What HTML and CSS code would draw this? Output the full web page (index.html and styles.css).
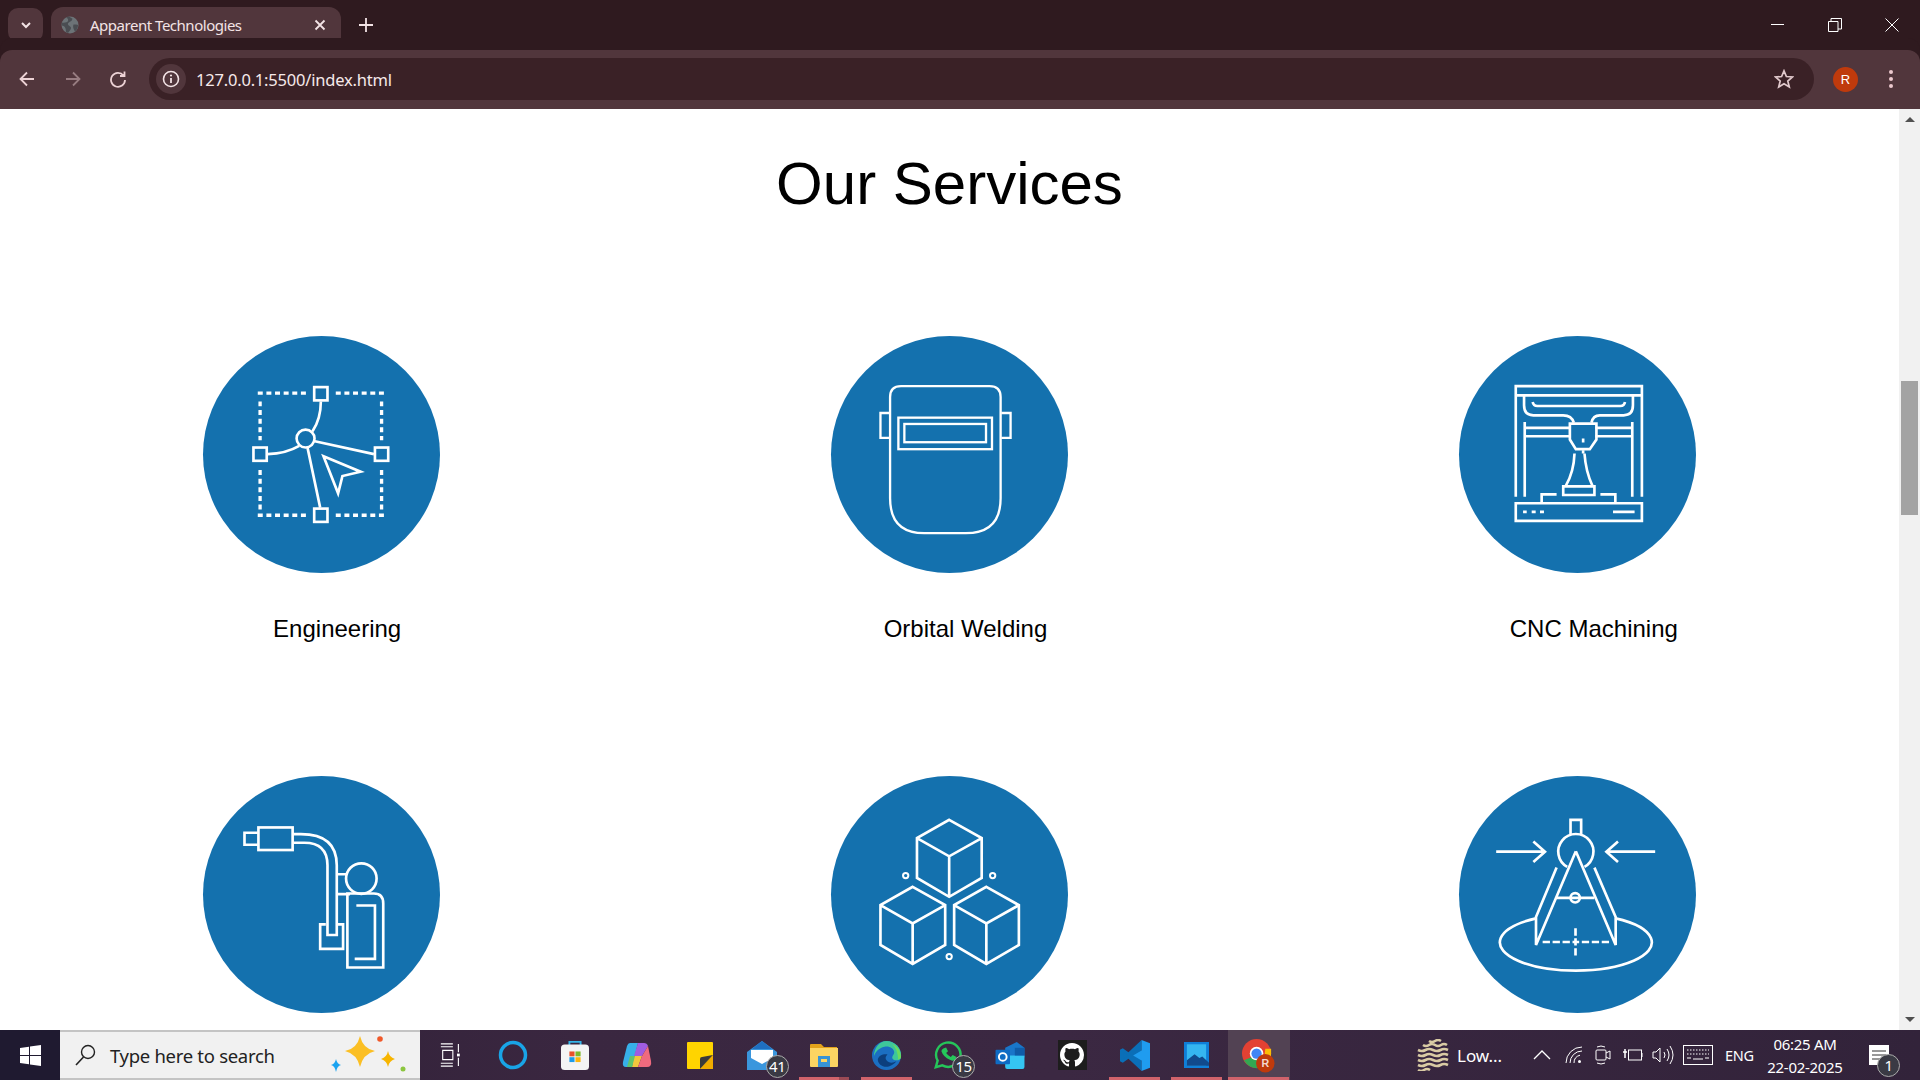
FILE: index.html
```html
<!DOCTYPE html>
<html lang="en-US">
  <head>
    <title>Apparent Technologies</title>
    <meta charset="utf-8" />
    <meta name="viewport" content="width=device-width, initial-scale=1.0" />
    <link rel="stylesheet" href="styles.css">
  </head>
  <body>
    <!-- browser chrome -->
    <header class="tabstrip">
      <div class="tab-search">
        <svg width="14" height="14" viewBox="0 0 14 14"><path class="chrome-stroke" d="M3 5l4 4 4-4" stroke-width="2"/></svg>
      </div>
      <div class="tab">
        <svg class="favicon" width="18" height="18" viewBox="0 0 18 18"><circle cx="9" cy="9" r="8.500" fill="#6c7377"/><path d="M5 1.500c2 1 2.500 2 2 3.500S3 7 1 6.500c-.5 1-.5 2-.5 3 2 0 3.500 1 4 3s.5 3 .5 3.500l2 1c1-2 3-3 3-5s-3-2-3-4 3-2 4-4 0-1.500 0-1.500L8 .5z" fill="#4a4d52"/><path d="M12.500 8.500c2 0 3.500 0 4.500.5 0 3-1 5-3 6.500-1.500-2-2.500-5-1.500-7z" fill="#4a4d52"/></svg>
        <span class="tab-title">Apparent Technologies</span>
        <svg class="tab-close" width="12" height="12" viewBox="0 0 12 12"><path class="chrome-stroke" d="M1.500 1.500l9 9M10.500 1.500l-9 9" stroke-width="1.800"/></svg>
      </div>
      <svg class="new-tab" width="14" height="14" viewBox="0 0 14 14"><path class="chrome-stroke" d="M7 0v14M0 7h14" stroke-width="1.800"/></svg>
      <div class="window-btns">
        <svg width="14" height="14" viewBox="0 0 14 14"><path d="M0 6.500h13" stroke="#fff" fill="none" stroke-width="1"/></svg>
        <svg width="14" height="14" viewBox="0 0 14 14"><path d="M.500 3.500h9.500v10H.500zM3 3.500V.500h10.500V11H10" stroke="#fff" fill="none"/></svg>
        <svg width="14" height="14" viewBox="0 0 14 14"><path d="M.500.500l13 13M13.500.500l-13 13" stroke="#fff" fill="none"/></svg>
      </div>
    </header>

    <nav class="toolbar">
      <svg class="nav-btn" width="18" height="18" viewBox="0 0 18 18"><path class="nav-stroke" d="M16 9H2.500M9 2.500L2.500 9 9 15.500"/></svg>
      <svg class="nav-btn nav-off" width="18" height="18" viewBox="0 0 18 18"><path class="nav-stroke" d="M2 9h13.500M9 2.500L15.500 9 9 15.500"/></svg>
      <svg class="nav-btn" width="18" height="18" viewBox="0 0 18 18"><path class="nav-stroke" d="M14.500 5.500A7 7 0 1 0 16 10M15.500 1.500v4.500H11"/></svg>
      <div class="address">
        <div class="info-chip">
          <svg width="18" height="18" viewBox="0 0 18 18"><circle cx="9" cy="9" r="7.500" fill="none" stroke="#f3e3e5" stroke-width="1.600"/><path d="M9 8v5" stroke="#f3e3e5" stroke-width="1.800"/><circle cx="9" cy="5.500" r="1.100" fill="#f3e3e5"/></svg>
        </div>
        <span class="url">127.0.0.1:5500/index.html</span>
        <svg class="star" width="20" height="20" viewBox="0 0 20 20"><path d="M10 1.800l2.400 5.700 6.100.5-4.700 4 1.500 6-5.300-3.200L4.700 18l1.500-6-4.700-4 6.100-.5z" fill="none" stroke="#e0c8cb" stroke-width="1.700"/></svg>
      </div>
      <div class="avatar">R</div>
      <div class="kebab"><i></i><i></i><i></i></div>
    </nav>

    <main class="page">
      <div class="content">
        <h1>Our Services</h1>
        <section class="services">
          <div class="service">
            <div class="service-circle">
              <svg class="line-icon" viewBox="35 31 714 714">
                <path class="dots" d="M200 203H345M435 203H580M207 228V345M573 228V345M207 435V555M573 435V555M200 571H345M435 571H580"/>
                <rect x="370" y="185" width="40" height="40"/>
                <rect x="187" y="367" width="40" height="40"/>
                <rect x="553" y="367" width="40" height="40"/>
                <rect x="370" y="551" width="40" height="40"/>
                <circle cx="344" cy="340" r="27"/>
                <path d="M390 228Q390 280 365 318M230 387Q285 385 325 362M372 348L550 387M350 368L388 548"/>
                <path d="M398 393L510 440L455 453L442 505Z"/>
              </svg>
            </div>
            <p class="service-name">Engineering</p>
          </div>
          <div class="service">
            <div class="service-circle">
              <svg class="line-icon thin" viewBox="29 31 714 714">
                <path d="M207 215Q207 182 240 182H507Q540 182 540 215V520Q540 625 435 625H310Q207 625 207 520Z"/>
                <path d="M205 263H178V338H205M542 263H570V338H542"/>
                <rect x="232" y="277" width="282" height="95"/>
                <rect x="250" y="296" width="246" height="55"/>
              </svg>
            </div>
            <p class="service-name">Orbital Welding</p>
          </div>
          <div class="service">
            <div class="service-circle">
              <svg class="line-icon" viewBox="26 31 714 714">
                <path d="M197 515V182H577V515M197 210H577"/>
                <path d="M197 535H577V588H197Z"/>
                <path d="M224 290V515M548 290V515M224 308H360M224 333H360M437 308H548M437 333H548"/>
                <path d="M360 295H440V343L420 372H378L360 343Z"/>
                <path d="M400 340V352M400 375V385"/>
                <path d="M222 212V240Q222 270 250 270H340Q365 270 372 292M550 212V240Q550 270 522 270H450Q430 270 425 292"/>
                <path d="M248 230Q250 242 262 242H512Q524 242 526 230"/>
                <path d="M374 385Q372 440 348 482M404 385Q408 440 428 482"/>
                <path d="M340 484H434V510H340Z"/>
                <path d="M320 508H275V533M452 508H497V533"/>
                <path d="M219 561H230M245 561H257M270 561H282M490 561H555"/>
              </svg>
            </div>
            <p class="service-name">CNC Machining</p>
          </div>
          <div class="service">
            <div class="service-circle">
              <svg class="line-icon" viewBox="35 31 714 714">
                <path d="M200 202H160V238H200"/>
                <rect x="202" y="186" width="103" height="68"/>
                <path d="M305 206H330Q438 206 438 300V510H410V300Q410 232 340 232H305"/>
                <path d="M405 478H388V552H457V478H438"/>
                <circle cx="512" cy="340" r="46"/>
                <path d="M440 327H468M440 387H478"/>
                <path d="M470 385H550Q578 385 578 415V608H470Z"/>
                <path d="M497 421H553V582H492"/>
              </svg>
            </div>
          </div>
          <div class="service">
            <div class="service-circle">
              <svg class="line-icon" viewBox="29 31 714 714">
                <path d="M385 163L483 218V338L385 395L288 338V218ZM288 218L385 273L483 218M385 273V395"/>
                <path d="M275 365L373 420V540L275 597L178 540V420ZM178 420L275 475L373 420M275 475V597"/>
                <path d="M497 365L595 420V540L497 597L400 540V420ZM400 420L497 475L595 420M497 475V597"/>
                <circle class="ring" cx="254" cy="331" r="8"/>
                <circle class="ring" cx="516" cy="331" r="8"/>
                <circle class="ring" cx="385" cy="575" r="8"/>
              </svg>
            </div>
          </div>
          <div class="service">
            <div class="service-circle">
              <svg class="line-icon" viewBox="26 31 714 714">
                <path d="M138 259H285M250 228L285 259L250 290M617 259H470M505 228L470 259L505 290"/>
                <path d="M362 207V163H394V207"/>
                <path d="M352 305A53 53 0 1 1 404 305"/>
                <path d="M378 258L258 540V456L320 307M378 258L498 540V456L434 307"/>
                <path d="M320 398H362M392 398H434M362 398H392"/>
                <circle cx="376" cy="398" r="14"/>
                <path d="M258 460A229 85 0 1 0 498 460"/>
                <path d="M278 531H300M308 531H330M338 531H360M368 531H388M396 531H418M426 531H448M456 531H478"/>
                <path d="M377 490V512M377 520V542M377 550V572"/>
              </svg>
            </div>
          </div>
        </section>
      </div>
      <div class="scrollbar">
        <div class="arrow-up"></div>
        <div class="scroll-track"><div class="scroll-thumb"></div></div>
        <div class="arrow-down"></div>
      </div>
    </main>

    <footer class="taskbar">
      <div class="start">
        <svg width="21" height="21" viewBox="0 0 21 21"><path fill="#fff" d="M0 3l9-1.300v8.300H0zM10 1.500L21 0v10H10zM0 11h9v8.300L0 18zM10 11h11v10l-11-1.500z"/></svg>
      </div>
      <div class="search">
        <svg width="24" height="24" viewBox="0 0 24 24"><circle cx="15" cy="9" r="6.500" fill="none" stroke="#222" stroke-width="1.400"/><path d="M10.500 14L3 22" stroke="#222" stroke-width="1.600"/></svg>
        <span class="search-text">Type here to search</span>
        <svg class="sparkles" width="84" height="46" viewBox="0 0 84 46">
          <path fill="#fbbf24" d="M30 4q3 13 15 15q-12 3-15 16q-3-13-15-16q12-2 15-15z"/>
          <path fill="#f7b500" d="M58 19q1 6 7 8q-6 2-7 8q-1-6-7-8q6-2 7-8z"/>
          <path fill="#1aa3f0" d="M6 27q1 5 5 6q-4 1-5 7q-1-6-5-7q4-1 5-6z"/>
          <circle cx="50" cy="7" r="2.800" fill="#f0592a"/>
          <circle cx="73" cy="37" r="2.500" fill="#8cc63f"/>
        </svg>
      </div>
      <div class="task-icons">
        <div class="task-icon">
          <svg width="24" height="24" viewBox="0 0 24 26" fill="none" stroke="#fff" stroke-width="1.200"><path d="M1 1h13M1 25h13M3 8h11v10H3zM1 4h13M1 22h13M20 1v9M20 16v9"/><rect x="18.500" y="11.500" width="3" height="3" fill="#fff" stroke="none"/></svg>
        </div>
        <div class="task-icon">
          <svg width="30" height="30" viewBox="0 0 30 30"><circle cx="15" cy="15" r="12.500" fill="none" stroke="#19a4e6" stroke-width="3.500"/></svg>
        </div>
        <div class="task-icon">
          <svg width="28" height="30" viewBox="0 0 30 34" preserveAspectRatio="none"><path d="M9 6V2h12v4" fill="none" stroke="#35b5e8" stroke-width="2"/><rect y="5" width="30" height="29" rx="4" fill="#f4f4f4"/><rect x="9" y="13" width="5.500" height="5.500" fill="#e8502a"/><rect x="15.500" y="13" width="5.500" height="5.500" fill="#7db82c"/><rect x="9" y="19.500" width="5.500" height="5.500" fill="#1c9bea"/><rect x="15.500" y="19.500" width="5.500" height="5.500" fill="#fbb50c"/></svg>
        </div>
        <div class="task-icon">
          <svg width="30" height="30" viewBox="0 0 30 30"><path fill="#37b0e8" d="M8 3h8l-6 24H4Q0 27 1 22L5 6q1-3 3-3z"/><path fill="#a05ce0" d="M16 3h6q3 0 4 3l-6 10H12z"/><path fill="#f2c53d" d="M12 16h8l-4 11h-6z"/><path fill="#ef6a7e" d="M20 16l6-10 3 15q1 6-4 6h-9z"/><path fill="#5fc46e" d="M8 16h5l-3 11H5z"/></svg>
        </div>
        <div class="task-icon">
          <svg width="26" height="27" viewBox="0 0 26 27"><path fill="#ffd400" d="M1 0h24q1 0 1 1v25q0 1-1 1H1q-1 0-1-1V1q0-1 1-1z"/><path fill="#3a3a3a" d="M13 27l13-14v4L17 27z"/><path fill="#3a3a3a" d="M13 27V17q0-2 2-2l11-2z"/><path fill="#f0ac00" d="M26 13v13q0 1-1 1H13z"/></svg>
        </div>
        <div class="task-icon">
          <svg width="30" height="29" viewBox="0 0 30 29"><path fill="#3a96dd" d="M0 11L15 0l15 11v18H0z"/><path fill="#fff" d="M4 9h22v8l-11 6-11-6z"/><path fill="#1f6fc0" d="M15 0L5 8h20z"/></svg>
          <span class="badge">41</span>
        </div>
        <div class="task-icon">
          <svg width="28" height="23" viewBox="0 0 28 23"><path fill="#e3a21a" d="M0 1q0-1 1-1h10l3 3h13v5H0z"/><path fill="#fcd462" d="M0 4h28v18q0 1-1 1H1q-1 0-1-1z"/><path fill="#3793d6" d="M8 12h12v11H8z"/><path fill="#fcd462" d="M11 15h6v3h-6z"/></svg>
        </div>
        <div class="task-icon">
          <svg width="31" height="31" viewBox="0 0 32 32"><circle cx="16" cy="16" r="15" fill="#1b6fc2"/><path fill="#3ec79a" d="M16 1a15 15 0 0 1 15 16c0 4-5 5-8 3s1-5 1-7c0-4-5-7-10-6-6 1-10 6-11 10C3 8 9 1 16 1z"/><path fill="#6bdc5e" d="M22 4a15 15 0 0 1 9 13c0 2-1 3-3 3 0-6-2-12-6-16z"/><path fill="#0c3f7d" d="M7 20c0 5 6 9 12 7 3-1 6-3 7-5-3 2-8 2-10-1s0-5 1-6c-4-1-9 1-10 5z"/></svg>
        </div>
        <div class="task-icon">
          <svg width="32" height="32" viewBox="0 0 34 34"><path fill="none" stroke="#25c65a" stroke-width="2.600" d="M4 30l2-7a13 13 0 1 1 5 5z"/><path fill="#25c65a" d="M12 10l3-1 2 4-2 2q2 3 5 4l2-2 4 2-1 3q-2 2-6 0-7-3-9-9 0-2 2-3z"/></svg>
          <span class="badge">15</span>
        </div>
        <div class="task-icon">
          <svg width="30" height="27" viewBox="0 0 30 28"><path fill="#1976c9" d="M10 6l12-6 8 6v10H10z"/><path fill="#35c5f2" d="M10 14h20v12q0 2-2 2H12q-2 0-2-2z"/><path fill="#0f5ca8" d="M20 6h10v8H20z"/><rect y="8" width="15" height="15" rx="1" fill="#0f6cc4"/><circle cx="7.500" cy="15.500" r="4" fill="none" stroke="#fff" stroke-width="2"/></svg>
        </div>
        <div class="task-icon">
          <div class="github-tile">
            <svg width="24" height="24" viewBox="0 0 16 16"><path fill="#fff" d="M8 0C3.580 0 0 3.580 0 8c0 3.540 2.290 6.530 5.470 7.590.4.070.55-.17.55-.38 0-.19-.01-.82-.01-1.490-2.010.37-2.530-.49-2.690-.94-.09-.23-.48-.94-.82-1.130-.28-.15-.68-.52-.01-.53.63-.01 1.080.58 1.230.82.720 1.210 1.870.87 2.330.66.070-.52.280-.87.510-1.070-1.780-.2-3.640-.89-3.640-3.950 0-.87.310-1.590.82-2.150-.08-.2-.36-1.020.08-2.120 0 0 .67-.21 2.200.82.64-.18 1.320-.27 2-.27.68 0 1.360.09 2 .27 1.530-1.040 2.200-.82 2.200-.82.44 1.100.16 1.920.08 2.120.51.56.82 1.270.82 2.150 0 3.070-1.870 3.750-3.650 3.950.29.25.54.73.54 1.480 0 1.070-.01 1.930-.01 2.200 0 .21.15.46.55.38A8.013 8.013 0 0 0 16 8c0-4.420-3.580-8-8-8z"/></svg>
          </div>
        </div>
        <div class="task-icon">
          <svg width="30" height="31" viewBox="0 0 32 38" preserveAspectRatio="none"><path fill="#0a6fb8" d="M23 0L9 15 3 10 0 12v14l3 2 6-5 14 15z"/><path fill="#1f9cf0" d="M23 0l9 4v30l-9 4V25l-9-6 9-6z"/><path fill="#0a6fb8" d="M4 15l5 4-5 4z"/></svg>
        </div>
        <div class="task-icon">
          <svg width="25" height="26" viewBox="0 0 26 34" preserveAspectRatio="none"><rect width="26" height="34" fill="#0f7fd8"/><rect x="3" y="3" width="20" height="28" fill="#35b6f0"/><path fill="#114a8c" d="M3 31V24l8-8 5 5 3-2 7 8v4z"/></svg>
        </div>
        <div class="task-icon task-active">
          <svg width="33" height="35" viewBox="0 0 34 36"><circle cx="15" cy="16" r="15" fill="#e34133"/><path fill="#33a852" d="M2 23a15 15 0 0 0 15 8l6-11H9z"/><path fill="#fbbc05" d="M30 16c0 8-6 15-13 15l6-11 1-9h6z"/><circle cx="15" cy="16" r="7" fill="#fff"/><circle cx="15" cy="16" r="5.300" fill="#4285f4"/><circle cx="24" cy="26" r="9.500" fill="#bf3a0c"/><text x="24" y="30" class="chrome-r">R</text></svg>
        </div>
      </div>
      <div class="task-marks">
        <i class="mark-mail"></i><i class="mark-edge"></i><i class="mark-vs"></i><i class="mark-ph"></i><i class="mark-ch"></i>
      </div>
      <div class="tray">
        <svg class="weather" width="32" height="32" viewBox="0 0 32 32" fill="none" stroke="#d9cba4" stroke-width="2.600"><path d="M12 2q3 2 6 0t6 0M6 6q3 2 6 0t6 0 6 0 6 0M1 11q4 2 7.500 0t7.500 0 7.500 0 7.500 0M1 16q4 2 7.500 0t7.500 0 7.500 0 7.500 0M1 21q4 2 7.500 0t7.500 0 7.500 0 7.500 0M1 26q4 2 7.500 0t7.500 0 7.500 0 7.500 0M1 31q3 2 6 0t6 0"/></svg>
        <span class="weather-text">Low...</span>
        <svg class="tray-chevron" width="18" height="10" viewBox="0 0 18 10"><path d="M1 9l8-8 8 8" fill="none" stroke="#fff" stroke-width="1.300"/></svg>
        <svg class="tray-wifi" width="18" height="18" viewBox="0 0 18 18" fill="none" stroke="#fff" stroke-width="1"><path d="M1 17A16 16 0 0 1 17 1M5 17A12 12 0 0 1 17 5M9 17a8 8 0 0 1 6-7.800"/><circle cx="14.500" cy="15.500" r="1.500" fill="#fff" stroke="none"/></svg>
        <svg class="tray-cam" width="16" height="22" viewBox="0 0 16 22" fill="none" stroke="#fff" stroke-width="1"><rect x="1" y="6" width="10" height="10" rx="1"/><path d="M11 9l4-2v8l-4-2M2 3q4-2 8 0M2 19q4 2 8 0"/></svg>
        <svg class="tray-battery" width="20" height="14" viewBox="0 0 20 14" fill="none" stroke="#fff" stroke-width="1"><rect x="5.500" y="2" width="13" height="10"/><path d="M19 5v4"/><path d="M0 4h4M2 1v9" stroke-width="1.500"/></svg>
        <svg class="tray-speaker" width="22" height="20" viewBox="0 0 22 20" fill="none" stroke="#fff" stroke-width="1"><path d="M1 7h3l4-4v14l-4-4H1zM12 7q2 3 0 6M15 4q4 6 0 12M18 1q6 9 0 18"/></svg>
        <svg class="tray-keys" width="30" height="20" viewBox="0 0 30 20" fill="none" stroke="#fff" stroke-width="1"><rect x=".5" y=".5" width="29" height="19"/><path stroke-dasharray="1.500 1.500" d="M4 5h22M4 9h22"/><path d="M4 13h4M10 14h10M22 13h4"/></svg>
        <span class="lang">ENG</span>
        <div class="clock"><span>06:25 AM</span><span>22-02-2025</span></div>
        <div class="notify">
          <svg width="20" height="20" viewBox="0 0 20 20"><path fill="#fff" d="M0 0h20v20H0z"/><path stroke="#333" d="M3 6h14M3 10h14M3 14h9"/></svg>
          <span class="badge notify-badge">1</span>
        </div>
      </div>
    </footer>
  </body>
</html>
```

FILE: styles.css
```css
* {
  box-sizing: border-box;
}
html,
body {
  margin: 0;
  height: 100%;
}
body {
  width: 1920px;
  height: 1080px;
  overflow: hidden;
  display: flex;
  flex-direction: column;
  background-color: #fff;
  font-family: "Liberation Sans", Arial, sans-serif;
}
svg {
  display: block;
  flex: none;
}

/* tab strip */
.tabstrip {
  height: 50px;
  flex: none;
  display: flex;
  align-items: flex-end;
  background-color: #2f1a1f;
  padding-left: 8px;
}
.tab-search {
  width: 35px;
  height: 34px;
  margin-bottom: 8px;
  border-radius: 10px;
  background-color: #51363c;
  display: flex;
  align-items: center;
  justify-content: center;
}
.chrome-stroke {
  fill: none;
  stroke: #f3e3e5;
}
.tab {
  position: relative;
  width: 290px;
  height: 43px;
  margin-left: 8px;
  padding: 0 15px 7px 10px;
  display: flex;
  align-items: center;
  border-radius: 12px 12px 0 0;
  background-color: #51363c;
}
.tab::before,
.tab::after {
  content: "";
  position: absolute;
  bottom: 0;
  width: 10px;
  height: 10px;
}
.tab::before {
  left: -10px;
  background: radial-gradient(circle at 0 0, transparent 10px, #51363c 10.500px);
}
.tab::after {
  right: -10px;
  background: radial-gradient(circle at 100% 0, transparent 10px, #51363c 10.500px);
}
.tab-title {
  margin-left: 11px;
  flex: 1;
  color: #f3e3e5;
  font: 15px "Noto Sans", sans-serif;
  letter-spacing: -0.48px;
}
.new-tab {
  margin: 0 0 18px 18px;
}
.window-btns {
  margin-left: auto;
  width: 150px;
  height: 50px;
  display: flex;
  justify-content: space-between;
  padding: 18px 21px 0 1px;
}

/* toolbar */
.toolbar {
  height: 59px;
  flex: none;
  display: flex;
  align-items: center;
  padding: 0 0 1px 18px;
  background-color: #51363c;
  border-radius: 12px 12px 0 0;
  box-shadow: 0 -12px 0 #2f1a1f;
  z-index: 1;
}
.nav-btn {
  margin-right: 27.500px;
}
.nav-off {
  opacity: 0.45;
}
.nav-stroke {
  fill: none;
  stroke: #ecd2d5;
  stroke-width: 1.800;
}
.address {
  width: 1665px;
  height: 42px;
  margin-left: -5.500px;
  padding: 0 20px 0 7px;
  display: flex;
  align-items: center;
  border-radius: 21px;
  background-color: #3a2126;
}
.info-chip {
  width: 30px;
  height: 30px;
  border-radius: 50%;
  background-color: #51363c;
  display: flex;
  align-items: center;
  justify-content: center;
}
.url {
  margin-left: 10px;
  flex: 1;
  color: #f6e9ea;
  font: 16.500px "Noto Sans", sans-serif;
  letter-spacing: -0.2px;
}
.avatar {
  width: 25px;
  height: 25px;
  margin-left: 19px;
  border-radius: 50%;
  background-color: #bf3a0c;
  color: #fff;
  font: 13px/25px "Liberation Sans", sans-serif;
  text-align: center;
}
.kebab {
  margin-left: 31px;
  display: flex;
  flex-direction: column;
  gap: 3px;
}
.kebab i {
  width: 4px;
  height: 4px;
  border-radius: 50%;
  background-color: #ecc9ce;
}

/* page */
.page {
  flex: 1;
  min-height: 0;
  display: flex;
  overflow: hidden;
}
.content {
  flex: 1;
  padding: 0 7px;
}
h1 {
  margin: 40px 0 0;
  font-size: 60px;
  font-weight: 400;
  line-height: 69px;
  text-align: center;
  color: #000;
}
.services {
  margin-top: 118px;
  display: grid;
  grid-template-columns: repeat(3, 1fr);
  grid-auto-rows: 440px;
}
.service {
  display: flex;
  flex-direction: column;
  align-items: center;
}
.service-circle {
  width: 237px;
  height: 237px;
  border-radius: 50%;
  background-color: #1471ae;
}
.service-name {
  margin: 42px 0 0;
  padding-left: 32px;
  font-size: 24px;
  line-height: 27px;
  color: #000;
}
.line-icon {
  width: 237px;
  height: 237px;
  fill: none;
  stroke: #fff;
  stroke-width: 8;
}
.line-icon.thin {
  stroke-width: 7;
}
.line-icon .dots {
  stroke-width: 10;
  stroke-dasharray: 15 11;
}
.line-icon .ring {
  stroke-width: 6;
}

/* scrollbar */
.scrollbar {
  width: 21px;
  flex: none;
  display: flex;
  flex-direction: column;
  align-items: center;
  background-color: #f1f1f1;
  padding: 8px 0;
}
.arrow-up,
.arrow-down {
  width: 0;
  height: 0;
  border-left: 5px solid transparent;
  border-right: 5px solid transparent;
}
.arrow-up {
  border-bottom: 5px solid #505050;
}
.arrow-down {
  border-top: 5px solid #505050;
}
.scroll-track {
  flex: 1;
  width: 100%;
  padding: 259px 2px 0 2px;
}
.scroll-thumb {
  height: 134px;
  background-color: #a3a3a3;
}

/* taskbar */
.taskbar {
  position: relative;
  height: 50px;
  flex: none;
  display: flex;
  align-items: stretch;
  background: linear-gradient(90deg, #2b1d33 0%, #3a2740 30%, #3b2842 55%, #32233a 100%);
  color: #fff;
  font-family: "Noto Sans", sans-serif;
}
.start {
  width: 60px;
  background-color: #1f1a30;
  display: flex;
  align-items: center;
  justify-content: center;
}
.search {
  width: 360px;
  display: flex;
  align-items: center;
  padding-left: 13px;
  background-color: #f1f1f1;
  border-top: 2px solid #c4c4c4;
  border-bottom: 2px solid #c4c4c4;
  color: #222;
}
.search-text {
  margin-left: 13px;
  width: 221px;
  font-size: 18.500px;
  letter-spacing: -0.3px;
}
.sparkles {
  margin-left: -1px;
}
.task-icons {
  display: flex;
}
.task-icon {
  position: relative;
  flex: none;
  width: 62.150px;
  display: flex;
  align-items: center;
  justify-content: center;
}
.task-active {
  background-color: #524253;
}
.github-tile {
  width: 29px;
  height: 30px;
  background-color: #1d1d1d;
  display: flex;
  align-items: center;
  justify-content: center;
}
.chrome-r {
  fill: #f3d9cf;
  font: 700 11px "Liberation Sans", sans-serif;
  text-anchor: middle;
}
.badge {
  position: absolute;
  left: 35px;
  bottom: 2px;
  width: 23px;
  height: 23px;
  border-radius: 50%;
  border: 1px solid #aaa;
  background-color: #3a3a44;
  color: #fff;
  font-size: 15px;
  line-height: 20px;
  letter-spacing: -0.5px;
  text-align: center;
}
.task-marks i {
  position: absolute;
  bottom: 0;
  height: 3px;
  background-color: #d0636b;
}
.task-marks .mark-mail {
  left: 799px;
  width: 50px;
  background: linear-gradient(90deg, #d0636b 80%, #9a4a55 80%);
}
.mark-edge {
  left: 861px;
  width: 51px;
}
.mark-vs {
  left: 1109px;
  width: 51px;
}
.mark-ph {
  left: 1171px;
  width: 51px;
}
.mark-ch {
  left: 1228px;
  width: 61px;
}
.tray {
  margin-left: 127px;
  flex: 1;
  display: flex;
  align-items: center;
}
.weather-text {
  margin-left: 8px;
  width: 76px;
  font-size: 17px;
}
.tray-wifi {
  margin-left: 14px;
}
.tray-cam {
  margin-left: 12px;
}
.tray-battery {
  margin-left: 12px;
}
.tray-speaker {
  margin-left: 9.500px;
}
.tray-keys {
  margin-left: 9px;
}
.lang {
  margin-left: 11.500px;
  width: 42px;
  font-size: 14.500px;
  letter-spacing: -0.3px;
}
.clock {
  width: 76px;
  display: flex;
  flex-direction: column;
  align-items: center;
  gap: 3px;
  font-size: 15px;
  line-height: 20px;
  letter-spacing: -0.3px;
  white-space: nowrap;
}
.notify {
  position: relative;
  margin-left: 26px;
}
.notify-badge {
  left: 8px;
  bottom: -12px;
}
```
